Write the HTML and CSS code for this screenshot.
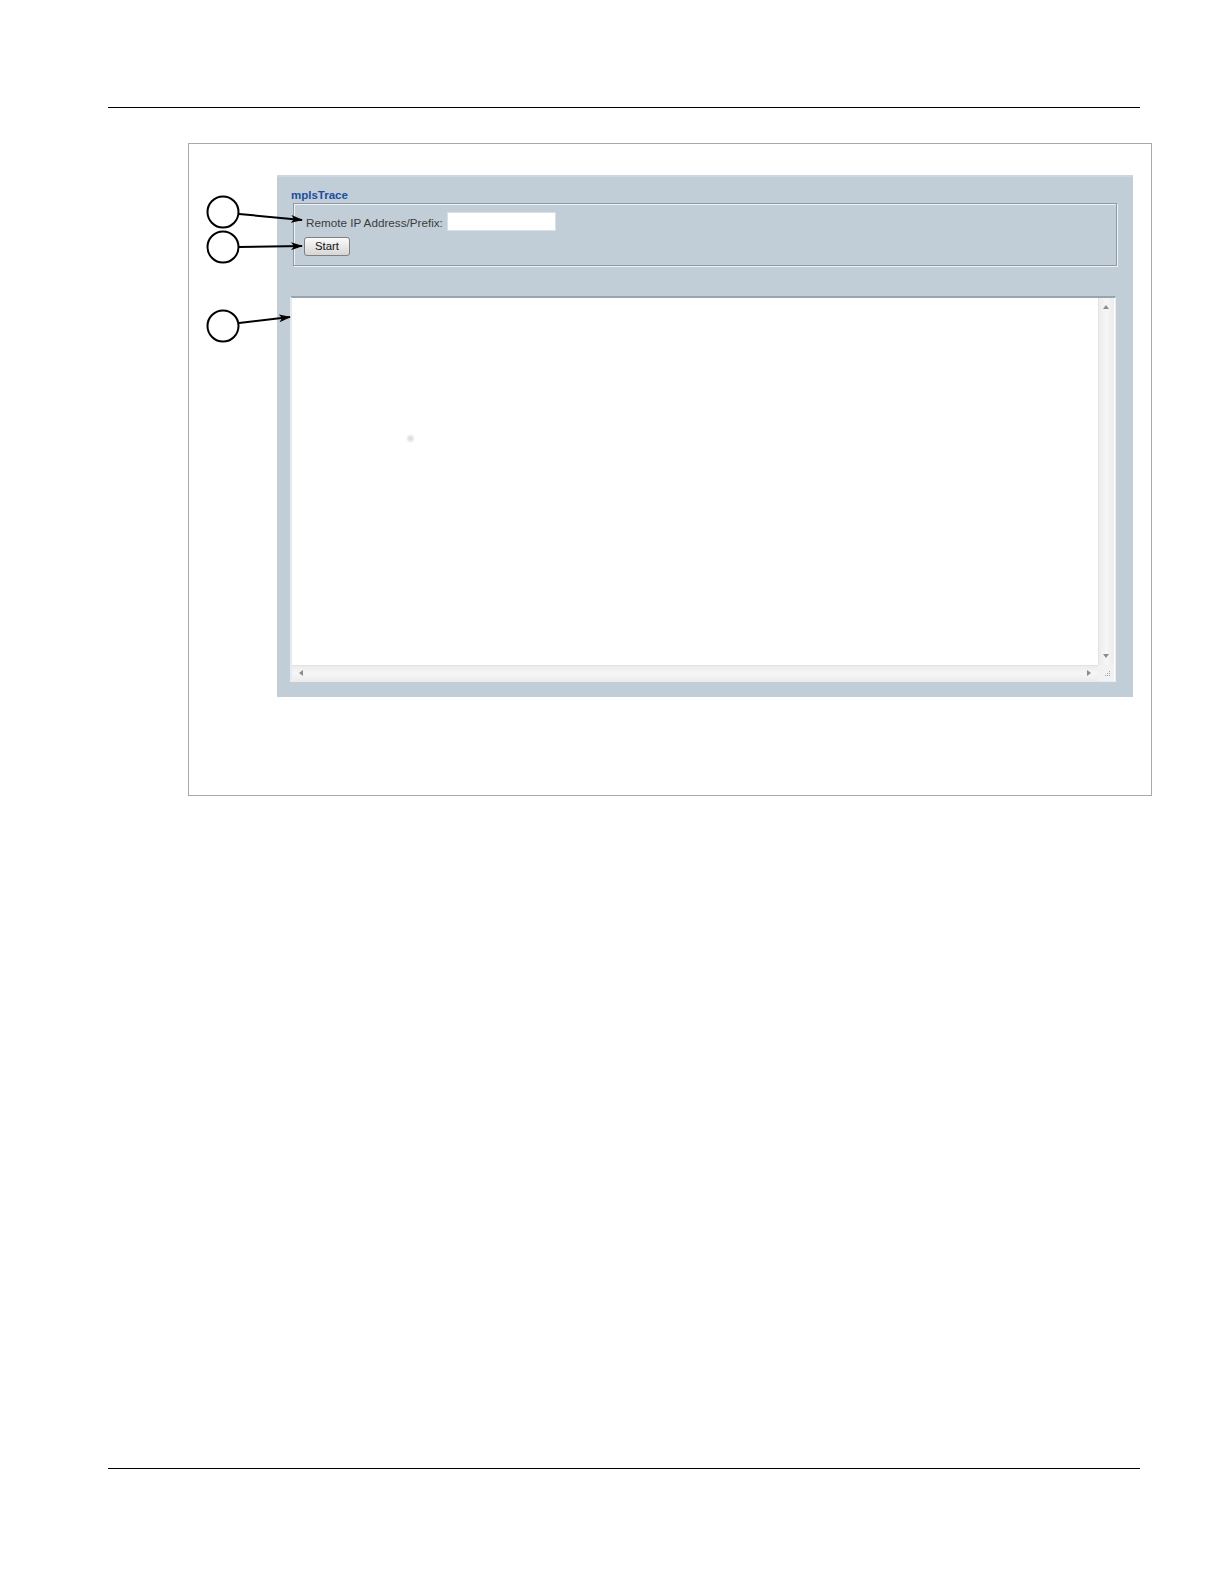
FILE: index.html
```html
<!DOCTYPE html>
<html>
<head>
<meta charset="utf-8">
<title>mplsTrace</title>
<link rel="stylesheet" href="styles.css">
</head>
<body>
<div class="page">
  <div class="rule rule-top"></div>
  <div class="figure">
    <div class="panel">
      <div class="title">mplsTrace</div>
      <div class="fieldset">
        <div class="row">
          <span class="label">Remote IP Address/Prefix:</span>
          <span class="input"></span>
        </div>
        <div class="row">
          <span class="button">Start</span>
        </div>
      </div>
      <div class="textarea">
        <div class="ta-body"><span class="dot"></span></div>
        <div class="vscroll">
          <span class="tri tri-up"></span>
          <span class="tri tri-down"></span>
        </div>
        <div class="hscroll">
          <span class="tri tri-left"></span>
          <span class="tri tri-right"></span>
        </div>
        <div class="corner">
          <svg width="16" height="16" viewBox="0 0 16 16">
            <g fill="#a0a0a0">
              <rect x="11" y="6" width="1" height="1"/>
              <rect x="9" y="8" width="1" height="1"/>
              <rect x="11" y="8" width="1" height="1"/>
              <rect x="7" y="10" width="1" height="1"/>
              <rect x="9" y="10" width="1" height="1"/>
              <rect x="11" y="10" width="1" height="1"/>
            </g>
          </svg>
        </div>
      </div>
    </div>
  </div>
  <div class="spacer"></div>
  <div class="rule rule-bottom"></div>

  <svg class="callouts" width="1224" height="1584" viewBox="0 0 1224 1584">
    <defs>
      <marker id="ah" markerWidth="12" markerHeight="8" refX="11" refY="4" orient="auto" markerUnits="userSpaceOnUse">
        <path d="M0,0 L12,4 L0,8 L3,4 Z" fill="#000"/>
      </marker>
    </defs>
    <g fill="#fff" stroke="#000" stroke-width="2">
      <circle cx="223" cy="212" r="15.5"/>
      <circle cx="223" cy="247" r="15.5"/>
      <circle cx="223" cy="326" r="15.5"/>
    </g>
    <g stroke="#000" stroke-width="2" fill="none">
      <line x1="239" y1="214" x2="302" y2="220" marker-end="url(#ah)"/>
      <line x1="239" y1="247" x2="302" y2="246" marker-end="url(#ah)"/>
      <line x1="239" y1="323" x2="290" y2="317" marker-end="url(#ah)"/>
    </g>
  </svg>
</div>
</body>
</html>
```

FILE: styles.css
```css
html, body {
  margin: 0;
  padding: 0;
  background: #ffffff;
  overflow: hidden;
}

.page {
  position: relative;
  display: flow-root;
  width: 1224px;
  height: 1584px;
  overflow: hidden;
  font-family: "Liberation Sans", Arial, sans-serif;
}

.rule {
  margin-left: 108px;
  width: 1032px;
  height: 0;
  border-top: 1.5px solid #000;
}

.rule-top {
  margin-top: 107px;
}

.figure {
  margin-top: 35px;
  margin-left: 188px;
  width: 964px;
  height: 653px;
  border: 1px solid #a9a9a9;
  padding: 31px 0 0 88px;
  box-sizing: border-box;
}

.panel {
  width: 856px;
  height: 522px;
  background: #c1cdd7;
  border-top: 2px solid #ccd7df;
  box-sizing: border-box;
  padding: 11px 0 0 13px;
  display: flex;
  flex-direction: column;
}

.title {
  font-size: 11.5px;
  font-weight: bold;
  color: #1c4d9e;
  line-height: 14px;
  height: 15px;
  padding-left: 1px;
}

.fieldset {
  margin-left: 3px;
  width: 824px;
  height: 63px;
  box-sizing: border-box;
  border: 1px solid #8e99a3;
  box-shadow: inset 1px 1px 0 #eef2f5, 1px 1px 0 #eef2f5;
  padding: 7px 0 0 10px;
  display: flex;
  flex-direction: column;
  gap: 4px;
}

.row {
  display: flex;
  align-items: center;
  height: 20px;
}

.label {
  font-size: 11.7px;
  color: #3c3c3c;
  padding-left: 2px;
  margin-top: 2px;
}

.input {
  display: block;
  width: 109px;
  height: 19px;
  margin-left: 4px;
  background: #ffffff;
  box-sizing: border-box;
  border: 1px solid #d8e0e6;
}

.button {
  display: flex;
  align-items: center;
  justify-content: center;
  width: 46px;
  height: 19px;
  box-sizing: border-box;
  border: 1px solid #7f7f7f;
  border-radius: 3px;
  background: linear-gradient(#fbfbfb, #e6e6e6 55%, #d6d6d6);
  font-size: 11.3px;
  color: #111;
  margin-top: 2px;
}

.textarea {
  position: relative;
  margin-top: 30px;
  width: 826px;
  height: 386px;
  box-sizing: border-box;
  border: 1px solid #e8edf1;
  border-top: 2px solid #9aa4ad;
  border-left: 2px solid #e6ebef;
  background: #ffffff;
  display: grid;
  grid-template-columns: 1fr 16px;
  grid-template-rows: 1fr 16px;
  padding-right: 1px;
}

.ta-body {
  position: relative;
}

.dot {
  position: absolute;
  left: 114px;
  top: 136px;
  width: 9px;
  height: 9px;
  border-radius: 50%;
  background: radial-gradient(circle, #d6d6d6 0%, #ececec 45%, rgba(255,255,255,0) 75%);
}

.vscroll {
  position: relative;
  background: linear-gradient(90deg, #ececec, #f6f6f6 50%, #ececec);
  border-left: 1px solid #e2e2e2;
}

.hscroll {
  position: relative;
  background: linear-gradient(#ececec, #f6f6f6 50%, #ececec);
  border-top: 1px solid #e2e2e2;
}

.corner {
  background: #f2f2f2;
}

.corner svg {
  display: block;
}

.tri {
  position: absolute;
  width: 0;
  height: 0;
}

.tri-up {
  top: 7px;
  left: 4px;
  border-left: 3px solid transparent;
  border-right: 3px solid transparent;
  border-bottom: 4px solid #8c8c8c;
}

.tri-down {
  bottom: 7px;
  left: 4px;
  border-left: 3px solid transparent;
  border-right: 3px solid transparent;
  border-top: 4px solid #8c8c8c;
}

.tri-left {
  left: 7px;
  top: 4px;
  border-top: 3px solid transparent;
  border-bottom: 3px solid transparent;
  border-right: 4px solid #8c8c8c;
}

.tri-right {
  right: 7px;
  top: 4px;
  border-top: 3px solid transparent;
  border-bottom: 3px solid transparent;
  border-left: 4px solid #8c8c8c;
}

.spacer {
  height: 672px;
}

.callouts {
  position: absolute;
  left: 0;
  top: 0;
  pointer-events: none;
}
```
